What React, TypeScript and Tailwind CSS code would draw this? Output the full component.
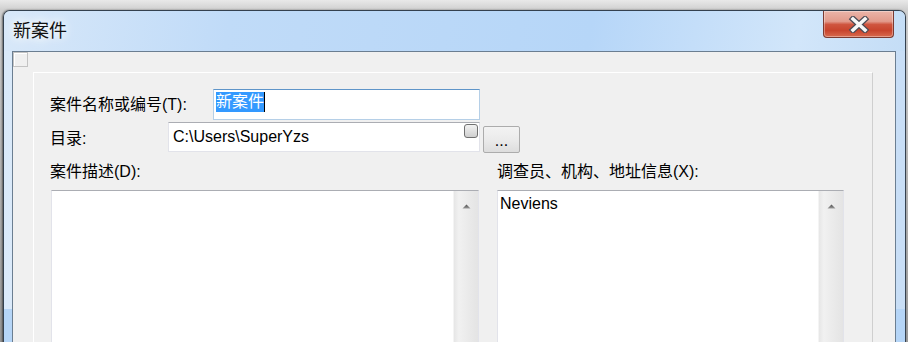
import React from 'react';

const ScrollArrow: React.FC = () => (
  <svg width="9" height="5" viewBox="0 0 9 5" className="mt-[13px]">
    <defs>
      <linearGradient id="ag" x1="0" y1="0" x2="0" y2="1">
        <stop offset="0" stopColor="#4e4e4e" />
        <stop offset="1" stopColor="#9a9a9a" />
      </linearGradient>
    </defs>
    <polygon points="0.5,4.5 4.5,0.5 8.5,4.5" fill="url(#ag)" />
  </svg>
);

const TextArea: React.FC<{ width: string; text?: string }> = ({ width, text }) => (
  <div
    className={`${width} h-[200px] flex bg-white border border-[#e2e3ea] border-t-[#abadb3]`}
  >
    <div className="flex-1 pl-[2px] pt-[4px] text-[16px] leading-[18px] text-black">{text}</div>
    <div className="w-[25px] flex justify-center border-l border-[#f4f4f4] bg-[linear-gradient(to_right,#e6e6e6,#f1f1f1_20%,#ebebeb_55%,#e4e4e4)]">
      <ScrollArrow />
    </div>
  </div>
);

const App: React.FC = () => {
  return (
    <div className="w-[908px] h-[342px] overflow-hidden bg-[linear-gradient(to_bottom,#e9e9e9,#cfcfcf_10px,#9a9a9a)] pt-[10px] pl-[3px] pr-[2px] font-['Liberation_Sans','Noto_Sans_CJK_SC',sans-serif] text-black">
      <div className="h-[340px] flex flex-col rounded-t-[7px] border border-b-0 border-[#34414f] overflow-hidden shadow-[-1px_0_2px_rgba(0,0,0,0.5)]">
        {/* title bar */}
        <div className="h-[40px] flex items-start justify-between bg-[linear-gradient(100deg,#d8e8f9_0%,#c0dbf8_25%,#b6d6f8_65%,#d2e6fa_88%,#c4ddf6_100%)]">
          <span className="ml-[9px] mt-[10px] text-[18px] leading-[20px] text-[#111] [text-shadow:0_0_8px_#ffffff,0_0_14px_#ffffff]">
            新案件
          </span>
          <div className="mr-[11px] w-[71px] h-[27px] flex items-center justify-center rounded-b-[4px] border border-t-0 border-[#7b3a31] bg-[linear-gradient(to_bottom,#eab4a9_0%,#e29a8b_40%,#cf553f_52%,#c8442d_75%,#d86a4e_100%)] shadow-[inset_0_0_0_1px_rgba(255,255,255,0.35)]">
            <svg width="22" height="17" viewBox="0 0 22 17">
              <path d="M5 3 L17 14 M17 3 L5 14" stroke="#4b4b55" strokeWidth="6" strokeLinecap="square" />
              <path d="M5 3 L17 14 M17 3 L5 14" stroke="#f7f7f7" strokeWidth="3.6" strokeLinecap="square" />
            </svg>
          </div>
        </div>

        {/* body row: frame | client | frame */}
        <div className="flex flex-1 min-h-0">
          <div className="w-[8px] bg-[linear-gradient(to_bottom,#d9e9f9_0px,#dbeafa_258px,#b5d5f7_258px)]" />

          <div className="relative w-[884px] flex flex-col border-l border-t border-r border-[#6b7e91] bg-[#f0f0f0] pt-[20px] pl-[20px] pr-[22px]">
            {/* tiny box in the corner */}
            <div className="absolute top-0 left-0 w-[15px] h-[15px] border border-[#c3c3c3] bg-[#f0f0f0] shadow-[inset_1px_1px_0_#ffffff]" />

            {/* group panel */}
            <div className="flex-1 flex flex-col border-l border-t border-white border-r border-r-[#cfcfcf] pl-[16px] text-[16px] leading-[18px]">
              {/* row 1 */}
              <div className="mt-[16px] h-[31px] flex items-center">
                <span className="w-[163px]">案件名称或编号(T):</span>
                <div className="w-[267px] h-[31px] flex items-start pt-[2px] pl-[2px] bg-white border border-[#b5cfe7] border-t-[#5f95c9]">
                  <span className="bg-[#3399ff] text-white leading-[20px]">新案件</span>
                  <span className="w-[1px] h-[20px] bg-black" />
                </div>
              </div>

              {/* row 2 */}
              <div className="mt-[2px] h-[31px] flex items-start">
                <span className="w-[118px] mt-[8px]">目录:</span>
                <div className="relative w-[312px] h-[30px] flex items-center pl-[4px] bg-white border border-[#e2e3ea] border-t-[#abadb3]">
                  <span>C:\Users\SuperYzs</span>
                  <span className="absolute top-[1px] right-[1px] w-[14px] h-[14px] rounded-[3px] border border-[#707070] bg-[linear-gradient(to_bottom,#f2f2f2,#cfcfcf)]" />
                </div>
                <div className="ml-[3px] mt-[4px] w-[37px] h-[27px] flex items-center justify-center pt-[3px] border border-[#acacac] rounded-[2px] bg-[linear-gradient(to_bottom,#f3f3f3,#ebebeb_50%,#dddddd)]">
                  ...
                </div>
              </div>

              {/* row 3 labels */}
              <div className="mt-[10px] flex">
                <span className="w-[447px]">案件描述(D):</span>
                <span>调查员、机构、地址信息(X):</span>
              </div>

              {/* row 4 text areas */}
              <div className="mt-[9px] flex">
                <div className="ml-[1px] w-[446px]">
                  <TextArea width="w-[428px]" />
                </div>
                <TextArea width="w-[347px]" text="Neviens" />
              </div>
            </div>
          </div>

          <div className="flex-1 bg-[linear-gradient(to_bottom,#c8def6_0px,#c8def6_258px,#b5d5f7_258px)]" />
        </div>
      </div>
    </div>
  );
};

export default App;
